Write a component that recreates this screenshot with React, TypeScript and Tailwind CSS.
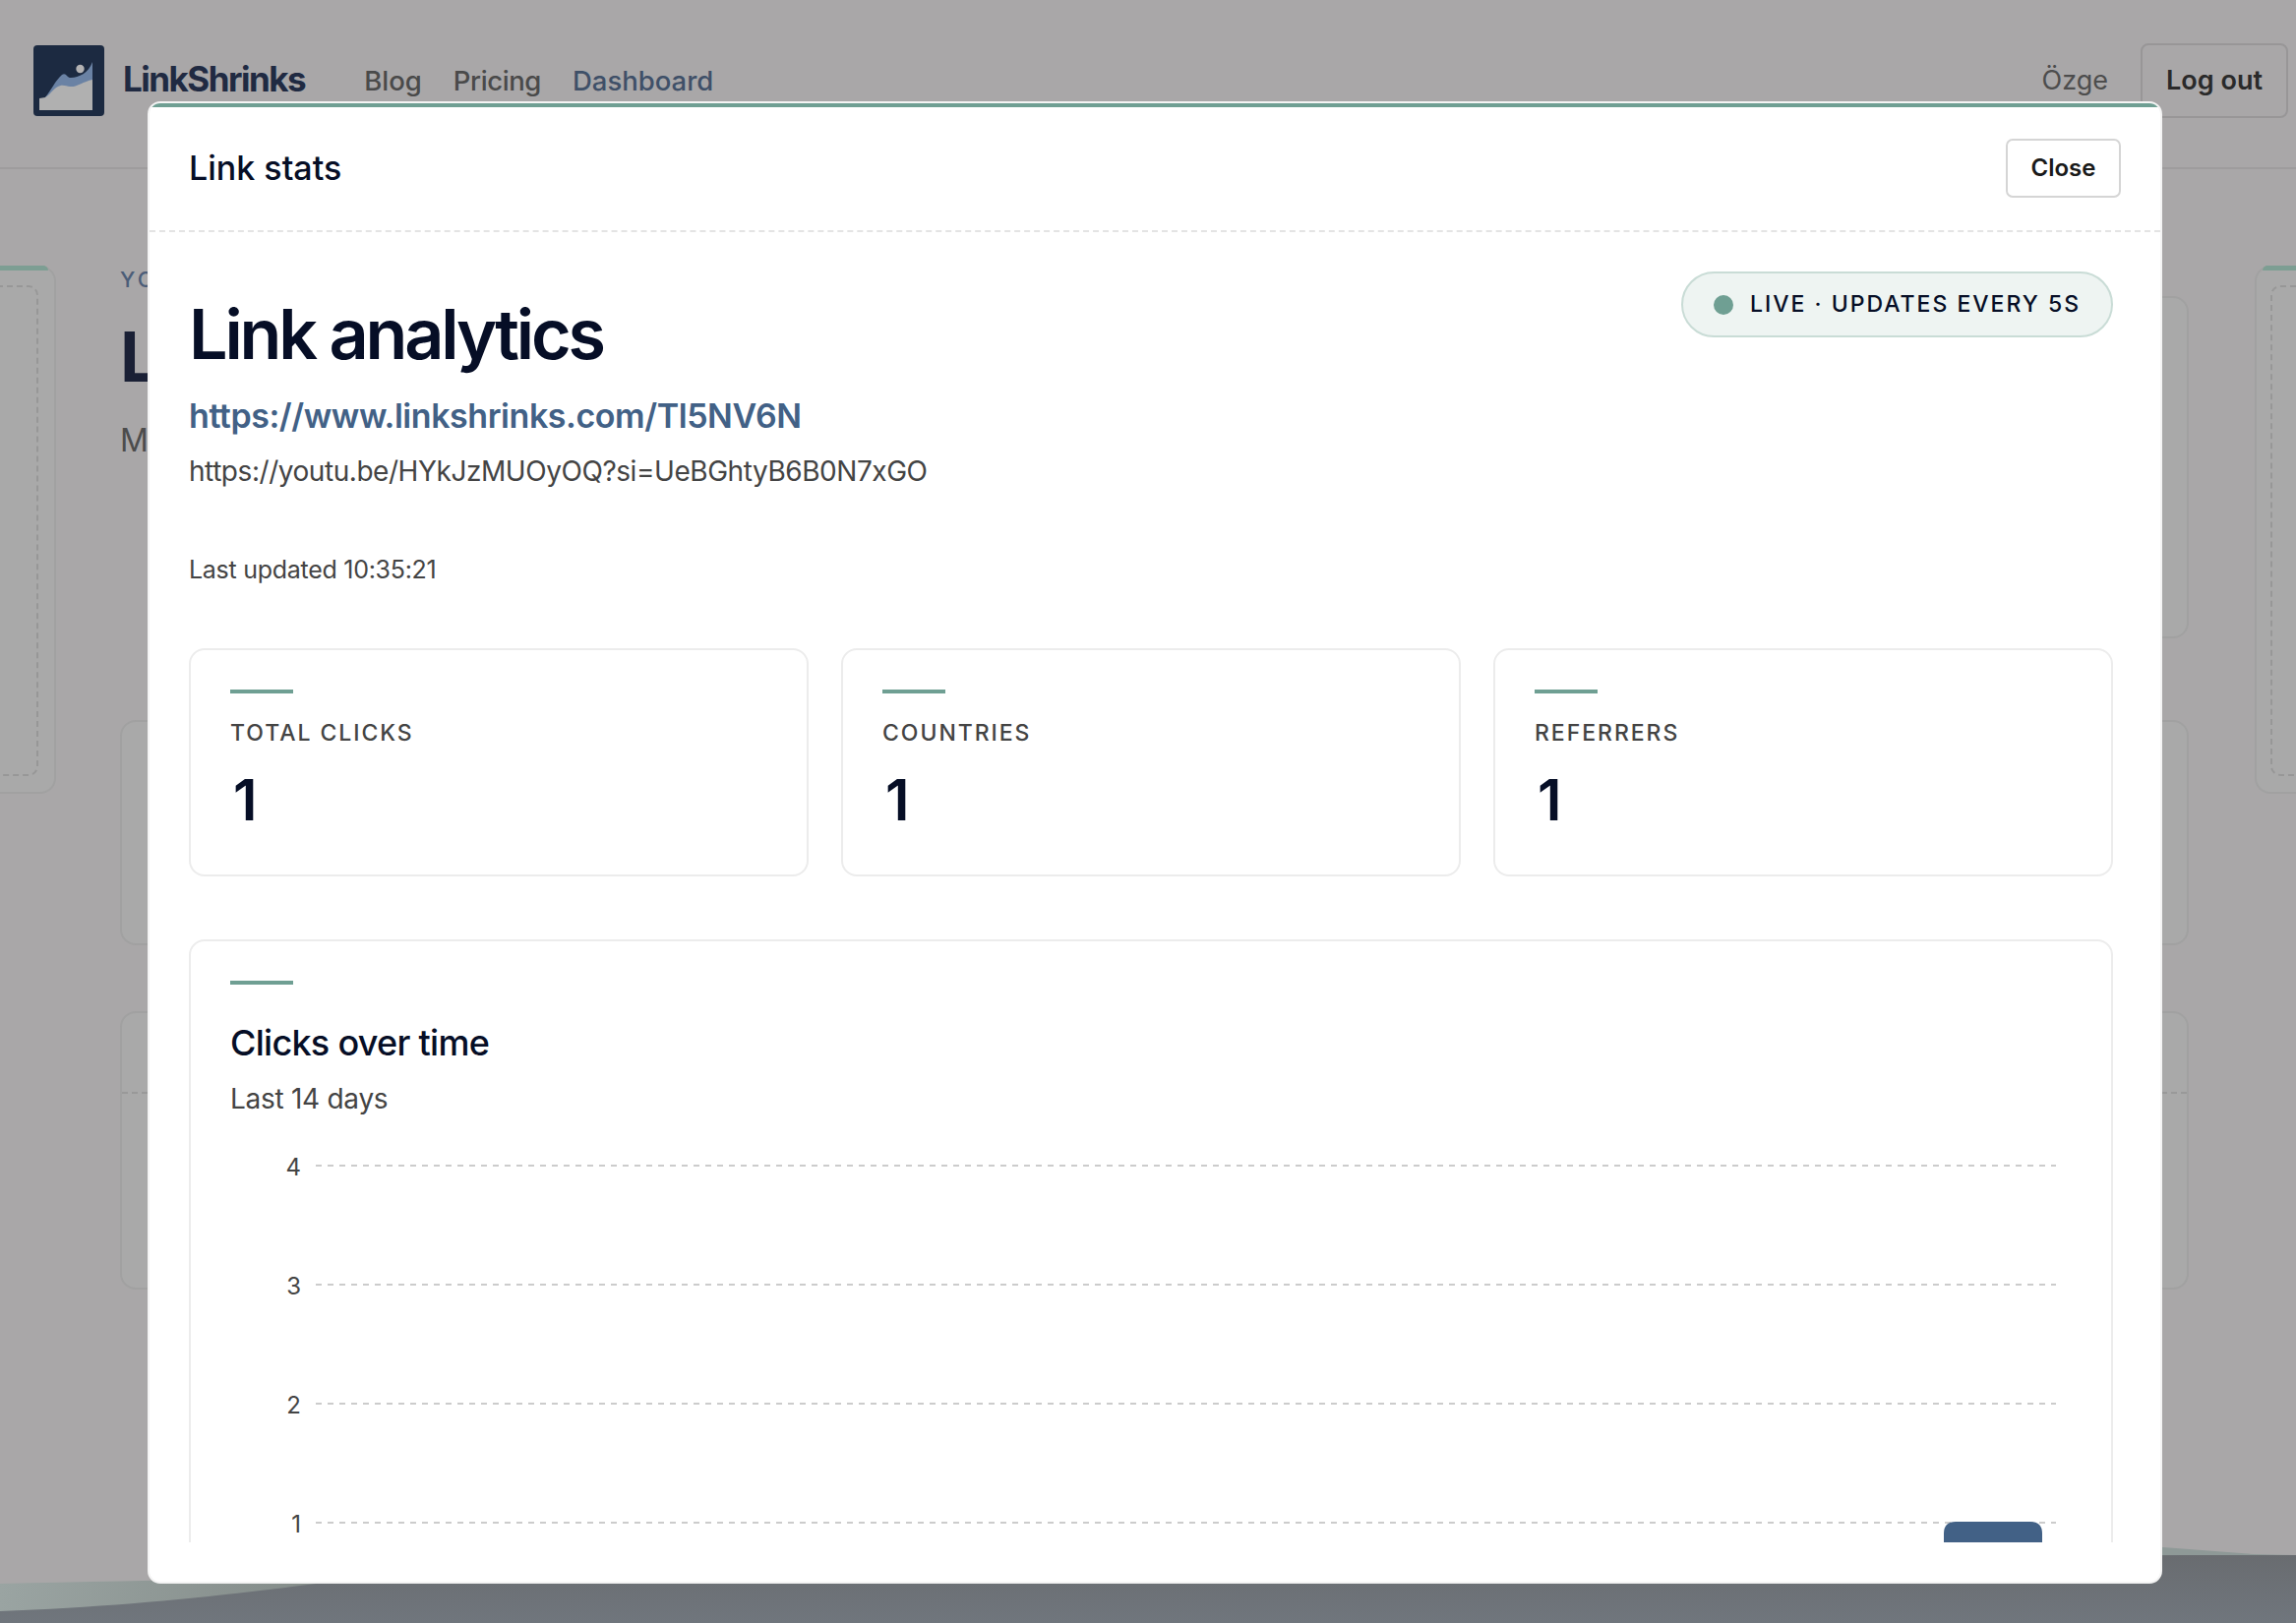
import React from "react";

const font = { fontFamily: '"Inter", "Liberation Sans", sans-serif' };

function Logo() {
  return (
    <svg viewBox="0 0 72 72" className="w-[72px] h-[72px] shrink-0">
      <rect width="72" height="72" rx="4" fill="#1c2a41" />
      <path d="M12 53 C18 46 22 36 29 30 C33 27 34 33 38 33 C46 33 56 28 60 17 L60 38 L30 46 L12 55 Z" fill="#6a82a4" />
      <circle cx="47.5" cy="24" r="4.2" fill="#b3b2b3" />
      <path d="M6 54 L12 53 C16 51 19 46 24 42.5 C29 39 33 41.5 37 42 C44 43 50 37 60 35 L60 66 L6 66 Z" fill="#b0b0b0" />
    </svg>
  );
}

function StatCard({ label, value }: { label: string; value: string }) {
  return (
    <div className="rounded-[16px] border-2 border-[#ececec] bg-white pt-[40px] pb-[44px] px-[40px]">
      <div className="h-[4px] w-[64px] bg-[#6f9f93]" />
      <div className="mt-[24px] text-[23px] leading-[32px] tracking-[0.085em] font-medium text-[#444444]">{label}</div>
      <div className="ml-[3px] mt-[20px] text-[58px] leading-[64px] font-semibold text-[#060e26]">{value}</div>
    </div>
  );
}

function Chart() {
  const lines = [
    { y: 25, label: "4" },
    { y: 146, label: "3" },
    { y: 267, label: "2" },
    { y: 388, label: "1" },
  ];
  return (
    <svg viewBox="0 0 1870 440" className="mt-[23px] block w-[1870px] h-[440px]">
      {lines.map((l) => (
        <g key={l.label}>
          <line x1="87" x2="1856" y1={l.y} y2={l.y} stroke="#cccccc" strokeWidth="2" strokeDasharray="6 6" />
          <text x="72" y={l.y + 10} textAnchor="end" fontSize="24" fill="#444444" fontFamily="Inter, sans-serif">
            {l.label}
          </text>
        </g>
      ))}
      <path d="M1742 440 L1742 399 Q1742 387 1754 387 L1830 387 Q1842 387 1842 399 L1842 440 Z" fill="#426186" />
    </svg>
  );
}

function BgCard({ className }: { className: string }) {
  return <div className={`rounded-[16px] border-2 border-[#a1a1a1] bg-[#a9a9a9] ${className}`} />;
}

function Sidebar({ side }: { side: "left" | "right" }) {
  const left = side === "left";
  return (
    <div
      className={`h-[537px] w-[60px] shrink-0 border-y-2 border-[#a1a1a1] bg-[#a9a9a9] relative ${
        left ? "rounded-r-[16px] border-r-2 -ml-[3px]" : "rounded-l-[16px] border-l-2"
      }`}
    >
      <div
        className={`absolute -top-[2px] h-[5px] bg-[#7d9e93] ${left ? "left-0 right-[6px] rounded-tr-[10px]" : "right-0 left-[6px] rounded-tl-[10px]"}`}
      />
      <div
        className={`absolute top-[18px] bottom-[16px] border-y-2 border-dashed border-[#979797] ${
          left ? "left-0 right-[16px] border-r-2 rounded-r-[10px]" : "right-0 left-[14px] border-l-2 rounded-l-[10px]"
        }`}
      />
    </div>
  );
}

export default function App() {
  return (
    <div style={font} className="relative h-[1650px] w-[2334px] overflow-hidden bg-[#a9a7a8]">
      {/* page behind the dialog */}
      <header className="flex h-[172px] items-start justify-between border-b-2 border-[#9e9c9d] pl-[34px] pr-[8px] pt-[44px]">
        <div className="flex items-center">
          <div className="mt-[2px]">
            <Logo />
          </div>
          <span className="ml-[19px] -mt-[2px] text-[35px] font-bold tracking-[-0.043em] text-[#202a42]">LinkShrinks</span>
          <nav className="ml-[60px] mt-[4px] flex items-center gap-[32px] text-[27.5px] font-medium">
            <span className="text-[#4a4a4a]">Blog</span>
            <span className="tracking-[-0.015em] text-[#4a4a4a]">Pricing</span>
            <span className="text-[#3f5068]">Dashboard</span>
          </nav>
        </div>
        <div className="flex items-center gap-[33px]">
          <span className="text-[27px] text-[#4d4d4d]">Özge</span>
          <div className="flex h-[76px] w-[150px] items-center justify-center rounded-[8px] border-2 border-[#989697] text-[27px] font-semibold text-[#2a2a2a]">
            Log out
          </div>
        </div>
      </header>

      <main className="mt-[98px] flex items-start">
        <Sidebar side="left" />
        <div className="ml-[65px] w-[2103px] shrink-0">
          <div className="flex items-start justify-between">
            <div className="text-[#4b5d78]">
              <div className="text-[22px] leading-[28px] tracking-[0.15em] font-medium">YOUR LINKS</div>
              <div className="mt-[25px] text-[70px] leading-[80px] font-bold text-[#1a2035]">Links</div>
              <div className="mt-[25px] text-[32px] leading-[40px] text-[#4c4c4c]">Manage your links</div>
            </div>
            <BgCard className="mt-[31px] h-[348px] w-[400px]" />
          </div>
          <BgCard className="mt-[83px] h-[229px] w-full" />
          <div className="mt-[67px] h-[283px] w-full rounded-[16px] border-2 border-[#a1a1a1] bg-[#a9a9a9]">
            <div className="mt-[80px] border-b-2 border-dashed border-[#999999]" />
          </div>
        </div>
        <div className="ml-[67px]">
          <Sidebar side="right" />
        </div>
      </main>

      {/* bottom wave */}
      <svg viewBox="0 0 2334 100" className="absolute bottom-0 left-0 block h-[100px] w-[2334px]">
        <defs>
          <linearGradient id="hill" gradientUnits="userSpaceOnUse" x1="0" y1="0" x2="2199" y2="0">
            <stop offset="0" stopColor="#9aa4a2" />
            <stop offset="0.18" stopColor="#7f8784" />
            <stop offset="1" stopColor="#8e9997" />
          </linearGradient>
          <linearGradient id="ground" x1="0" y1="0" x2="0" y2="1">
            <stop offset="0" stopColor="#696c70" />
            <stop offset="1" stopColor="#70767d" />
          </linearGradient>
        </defs>
        <path d="M0 60 C600 48 1600 20 2199 23 L2290 30 L2334 31 L2334 100 L0 100 Z" fill="url(#hill)" />
        <path d="M0 88 C120 84 230 72 321 60 C800 38 1600 32 2334 31 L2334 100 L0 100 Z" fill="url(#ground)" />
      </svg>

      {/* dialog */}
      <div className="absolute left-[150px] top-[103px] flex h-[1507px] w-[2048px] flex-col overflow-hidden rounded-[13px] border-2 border-[#f4f4f4] bg-white">
        <div className="h-[4px] shrink-0 bg-[#6f9f93]" />
        <div className="flex h-[127px] shrink-0 items-center justify-between border-b-2 border-dashed border-[#e4e4e4] pl-[40px] pr-[40px]">
          <span className="mb-[3px] text-[34px] font-medium text-[#060e26]">Link stats</span>
          <button className="mb-[1px] h-[60px] w-[117px] rounded-[7px] border-2 border-[#d5d5d5] bg-white text-[24px] font-semibold text-[#1a1a1a]">
            Close
          </button>
        </div>

        <div className="mb-[40px] min-h-0 flex-1 overflow-hidden pl-[40px] pr-[48px] pt-[40px]">
          <div className="flex items-start justify-between">
            <div className="pt-[25px]">
              <h1 className="text-[70px] leading-[77px] font-semibold tracking-[-0.045em] text-[#060e26]">Link analytics</h1>
              <div className="mt-[21px] text-[34px] leading-[48px] font-semibold tracking-[-0.013em] text-[#426186]">https://www.linkshrinks.com/Tl5NV6N</div>
              <div className="mt-[12px] text-[28px] leading-[40px] tracking-[-0.016em] text-[#444444]">https://youtu.be/HYkJzMUOyOQ?si=UeBGhtyB6B0N7xGO</div>
              <div className="mt-[63px] text-[25px] leading-[34px] tracking-[-0.011em] text-[#444444]">Last updated 10:35:21</div>
            </div>
            <div className="flex h-[67px] w-[439px] items-center rounded-full border-2 border-[#c9dcd6] bg-[#eef4f2] pl-[31px]">
              <span className="h-[20px] w-[20px] rounded-full bg-[#6f9f93]" />
              <span className="ml-[17px] text-[23px] font-medium tracking-[0.087em] text-[#060e26]">LIVE · UPDATES EVERY 5S</span>
            </div>
          </div>

          <div className="mt-[63px] grid grid-cols-3 gap-[33px]">
            <StatCard label="TOTAL CLICKS" value="1" />
            <StatCard label="COUNTRIES" value="1" />
            <StatCard label="REFERRERS" value="1" />
          </div>

          <div className="mt-[64px] rounded-[16px] border-2 border-[#ececec] bg-white pt-[40px] px-[40px]">
            <div className="h-[4px] w-[64px] bg-[#6f9f93]" />
            <div className="mt-[35px] text-[36px] leading-[48px] font-[550] tracking-[-0.02em] text-[#060e26]">Clicks over time</div>
            <div className="mt-[13px] text-[28px] leading-[40px] tracking-[-0.01em] text-[#444444]">Last 14 days</div>
            <Chart />
          </div>
        </div>
      </div>
    </div>
  );
}
